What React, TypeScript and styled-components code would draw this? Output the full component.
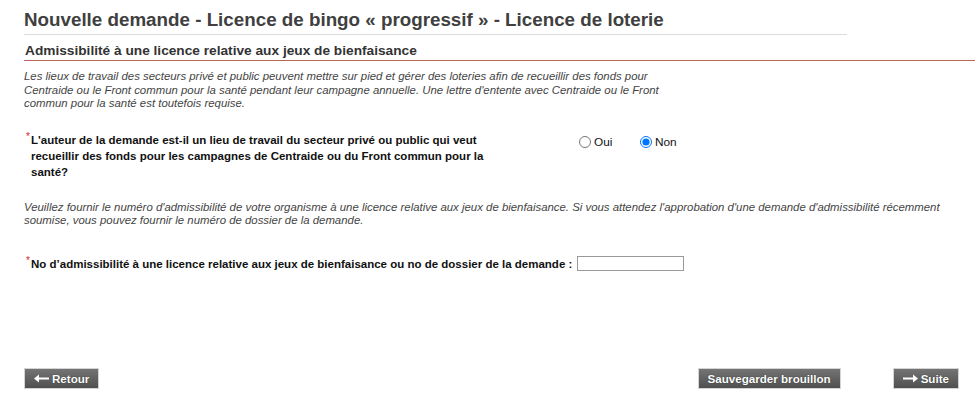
import React from "react";
import styled, { createGlobalStyle } from "styled-components";

const Global = createGlobalStyle`
  html, body { margin: 0; padding: 0; background: #fff; }
  body { font-family: Arial, "Liberation Sans", sans-serif; color: #333; }
`;

const Page = styled.div`
  width: 975px;
  height: 408px;
  display: flex;
  flex-direction: column;
  padding: 8px 0 0 24px;
  box-sizing: border-box;
`;

const Title = styled.h1`
  margin: 0;
  width: 823px;
  font-size: 18.8px;
  line-height: 24px;
  font-weight: bold;
  color: #404040;
  padding-bottom: 2px;
  border-bottom: 1px solid #dcdcdc;
`;

const SectionTitle = styled.h2`
  margin: 8px 0 0 0;
  font-size: 13.7px;
  line-height: 16px;
  font-weight: bold;
  color: #333;
  padding-left: 1px;
  padding-bottom: 1px;
  border-bottom: 1px solid #b8655a;
`;

const Intro = styled.p<{ $width?: number; $top: number }>`
  margin: ${(p) => p.$top}px 0 0 0;
  width: ${(p) => (p.$width ? `${p.$width}px` : "auto")};
  padding-right: ${(p) => (p.$width ? 0 : 28)}px;
  font-size: 11.4px;
  line-height: 13.5px;
  font-style: italic;
  color: #444;
`;

const QuestionRow = styled.div`
  display: flex;
  align-items: flex-start;
  margin-top: 21px;
`;

const Label = styled.label<{ $width?: number }>`
  position: relative;
  display: block;
  ${(p) => (p.$width ? `width: ${p.$width}px;` : "")}
  padding-left: 7px;
  font-size: 11.5px;
  line-height: 16px;
  font-weight: bold;
  color: #111;
`;

const Req = styled.span`
  position: absolute;
  left: 2px;
  top: -3px;
  color: #e0202a;
  font-size: 10px;
  font-weight: normal;
`;

const Radios = styled.div`
  display: flex;
  gap: 13px;
  margin-left: 75px;
  margin-top: 3px;
`;

const RadioOpt = styled.label`
  display: flex;
  align-items: center;
  width: 48px;
  font-size: 11.8px;
  color: #111;
  input {
    margin: 0 3px 0 0;
    width: 12px;
    height: 12px;
  }
`;

const FieldRow = styled.div`
  display: flex;
  align-items: center;
  margin-top: 28px;
`;

const TextInput = styled.input`
  margin-left: 5px;
  width: 107px;
  height: 15px;
  box-sizing: border-box;
  border: 1px solid #999;
  border-radius: 0;
  padding: 0 2px;
  font-size: 12px;
`;

const Footer = styled.div`
  margin-top: auto;
  margin-bottom: 19px;
  display: flex;
  align-items: center;
  padding-right: 16px;
`;

const Spacer = styled.div`
  flex: 1;
`;

const Btn = styled.button<{ $gapAfter?: number }>`
  display: inline-flex;
  align-items: center;
  gap: 3px;
  height: 21px;
  padding: 0 9px;
  margin-right: ${(p) => p.$gapAfter ?? 0}px;
  border: 1px solid #d4d4d4;
  border-radius: 0;
  background: linear-gradient(#747474, #505050);
  color: #fff;
  font-family: Arial, "Liberation Sans", sans-serif;
  font-size: 11.6px;
  font-weight: bold;
  text-shadow: 0 0 1px #222;
  cursor: pointer;
  svg { display: block; }
`;

const ArrowLeft = () => (
  <svg width="15" height="9" viewBox="0 0 15 9">
    <path d="M0 4.5 L5 0.5 L5 3.4 L15 3.4 L15 5.6 L5 5.6 L5 8.5 Z" fill="#fff" />
  </svg>
);

const ArrowRight = () => (
  <svg width="15" height="9" viewBox="0 0 15 9">
    <path d="M15 4.5 L10 0.5 L10 3.4 L0 3.4 L0 5.6 L10 5.6 L10 8.5 Z" fill="#fff" />
  </svg>
);

export default function App() {
  return (
    <>
      <Global />
      <Page>
        <Title>Nouvelle demande - Licence de bingo « progressif » - Licence de loterie</Title>
        <SectionTitle>Admissibilité à une licence relative aux jeux de bienfaisance</SectionTitle>
        <Intro $width={650} $top={9}>
          Les lieux de travail des secteurs privé et public peuvent mettre sur pied et gérer des loteries afin de recueillir des fonds pour
          Centraide ou le Front commun pour la santé pendant leur campagne annuelle. Une lettre d'entente avec Centraide ou le Front
          commun pour la santé est toutefois requise.
        </Intro>
        <QuestionRow>
          <Label $width={473}>
            <Req>*</Req>
            L'auteur de la demande est-il un lieu de travail du secteur privé ou public qui veut recueillir des fonds pour les campagnes de Centraide ou du Front commun pour la santé?
          </Label>
          <Radios>
            <RadioOpt>
              <input type="radio" name="q1" />
              Oui
            </RadioOpt>
            <RadioOpt>
              <input type="radio" name="q1" defaultChecked />
              Non
            </RadioOpt>
          </Radios>
        </QuestionRow>
        <Intro $top={21}>
          Veuillez fournir le numéro d'admissibilité de votre organisme à une licence relative aux jeux de bienfaisance. Si vous attendez l'approbation d'une demande d'admissibilité récemment soumise, vous pouvez fournir le numéro de dossier de la demande.
        </Intro>
        <FieldRow>
          <Label>
            <Req>*</Req>
            No d’admissibilité à une licence relative aux jeux de bienfaisance ou no de dossier de la demande :
          </Label>
          <TextInput type="text" />
        </FieldRow>
        <Footer>
          <Btn>
            <ArrowLeft />
            Retour
          </Btn>
          <Spacer />
          <Btn $gapAfter={52}>Sauvegarder brouillon</Btn>
          <Btn>
            <ArrowRight />
            Suite
          </Btn>
        </Footer>
      </Page>
    </>
  );
}
